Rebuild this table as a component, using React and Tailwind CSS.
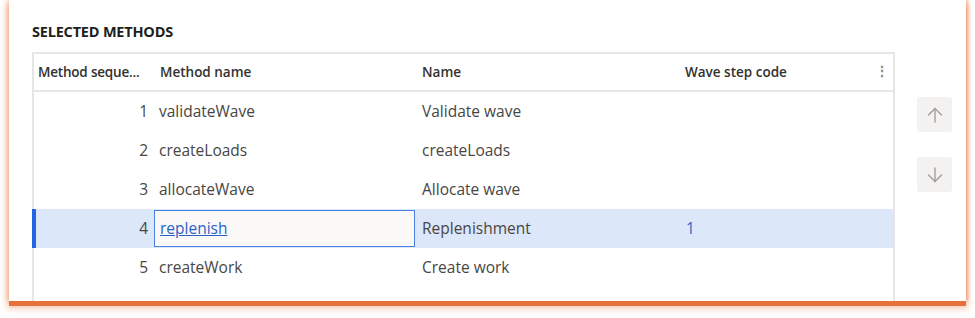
import React from 'react';

const rows = [
    { seq: 1, method: 'validateWave', name: 'Validate wave', code: '' },
    { seq: 2, method: 'createLoads', name: 'createLoads', code: '' },
    { seq: 3, method: 'allocateWave', name: 'Allocate wave', code: '' },
    { seq: 4, method: 'replenish', name: 'Replenishment', code: '1', selected: true },
    { seq: 5, method: 'createWork', name: 'Create work', code: '' },
];

const ArrowUp = () => (
    <svg width="20" height="20" viewBox="0 0 20 20" fill="none" stroke="#a19f9d" strokeWidth="1.4" strokeLinecap="round" strokeLinejoin="round">
        <path d="M10 17V3.5" />
        <path d="M3.5 10L10 3.5L16.5 10" />
    </svg>
);

const ArrowDown = () => (
    <svg width="20" height="20" viewBox="0 0 20 20" fill="none" stroke="#a19f9d" strokeWidth="1.4" strokeLinecap="round" strokeLinejoin="round">
        <path d="M10 3V16.5" />
        <path d="M3.5 10L10 16.5L16.5 10" />
    </svg>
);

const App = () => {
    return (
        <div className="w-[975px] h-[318px] bg-white overflow-hidden" style={{ fontFamily: '"Open Sans", "Noto Sans", sans-serif' }}>
            <div className="ml-[9px] w-[957px] h-[301px] bg-white overflow-hidden shadow-[0_5px_0_0_#e8713a,0_6px_6px_2px_rgba(232,113,58,0.35),-2px_0_5px_0_rgba(240,140,90,0.45),2px_0_3px_0_rgba(240,140,90,0.6)]">
                <div className="pl-[23px] pt-[23px] text-[14.5px] font-bold text-[#201f1e] leading-[18px] tracking-[-0.2px]">
                    SELECTED METHODS
                </div>

                <div className="flex mt-[11px] pl-[23px]">
                    {/* Grid */}
                    <div className="w-[863px] h-[260px] border-2 border-b-0 border-[#e8e6e4]">
                        <div className="grid grid-cols-[119px_262px_263px_1fr] h-[38px] items-center border-b-2 border-[#e8e6e4] text-[13.5px] text-[#323130] font-semibold">
                            <div className="pl-[4px] whitespace-nowrap tracking-[-0.2px]">Method seque...</div>
                            <div className="pl-[7px]">Method name</div>
                            <div className="pl-[7px]">Name</div>
                            <div className="flex items-center justify-between pl-[7px] pr-[4px]">
                                <span>Wave step code</span>
                                <span className="text-[#8a8886] font-bold leading-none">⋮</span>
                            </div>
                        </div>

                        {rows.map(row => (
                            <div
                                key={row.seq}
                                className={`relative grid grid-cols-[119px_262px_263px_1fr] h-[39px] items-center text-[15.5px] ${row.selected ? 'bg-[#dce7f9]' : ''}`}
                            >
                                {row.selected && (
                                    <div className="absolute -left-[2px] top-0 bottom-0 w-[4px] bg-[#2266e3]" />
                                )}
                                <div className="text-right pr-[5px] text-[#484644]">{row.seq}</div>
                                {row.selected ? (
                                    <div className="h-[37px] ml-[1px] flex items-center pl-[5px] border border-[#4a80e4] bg-[#faf9f8]">
                                        <span className="text-[#2b62c8] underline">{row.method}</span>
                                    </div>
                                ) : (
                                    <div className="pl-[6px] text-[#484644]">{row.method}</div>
                                )}
                                <div className="pl-[7px] text-[#484644]">{row.name}</div>
                                <div className="pl-[8px] text-[#2b62c8]">{row.code}</div>
                            </div>
                        ))}
                    </div>

                    {/* Move buttons */}
                    <div className="flex flex-col gap-[25px] ml-[22px] mt-[45px]">
                        <div className="w-[35px] h-[35px] rounded-[3px] bg-[#f3f2f1] flex items-center justify-center">
                            <ArrowUp />
                        </div>
                        <div className="w-[35px] h-[35px] rounded-[3px] bg-[#f3f2f1] flex items-center justify-center">
                            <ArrowDown />
                        </div>
                    </div>
                </div>
            </div>
        </div>
    );
};

export default App;
